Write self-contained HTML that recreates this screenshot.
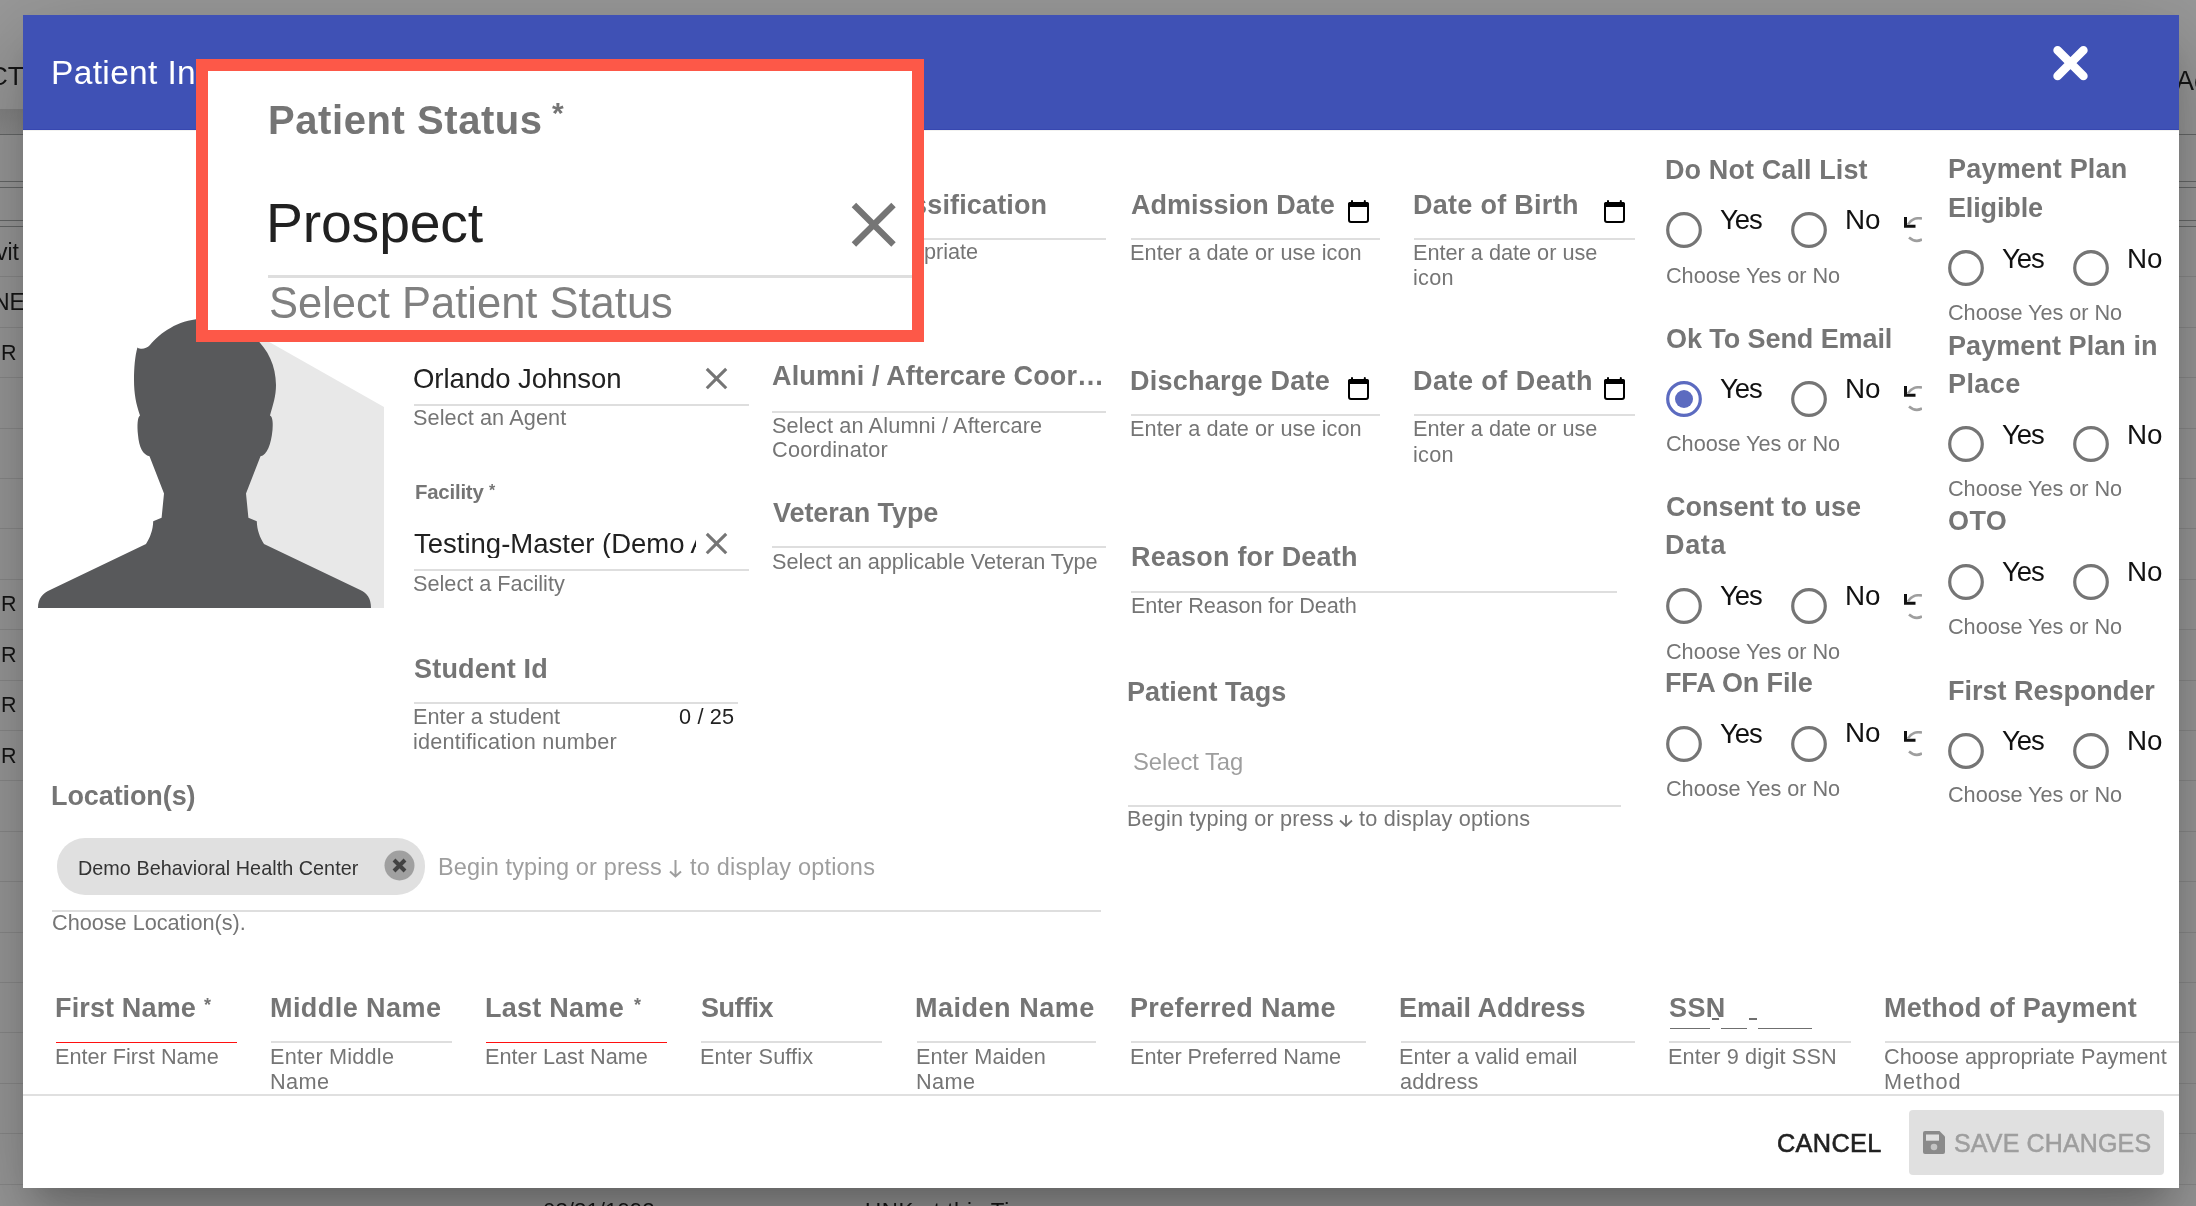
<!DOCTYPE html>
<html><head><meta charset="utf-8"><style>
html,body{margin:0;padding:0;}
body{width:2196px;height:1206px;position:relative;overflow:hidden;background:#999999;font-family:"Liberation Sans",sans-serif;}
.t{position:absolute;white-space:nowrap;will-change:transform;}
.r{position:absolute;}
.a{position:absolute;display:block;}
.modal{position:absolute;left:23px;top:15px;width:2156px;height:1173px;background:#fff;box-shadow:0 22px 30px -14px rgba(0,0,0,.2),0 48px 76px 6px rgba(0,0,0,.14),0 18px 92px 16px rgba(0,0,0,.12);}
</style></head><body>
<div class="r" style="left:0px;top:134px;width:23px;height:1px;background:#666868;"></div>
<div class="r" style="left:2179px;top:134px;width:17px;height:1px;background:#666868;"></div>
<div class="r" style="left:0px;top:181px;width:23px;height:1px;background:#666868;"></div>
<div class="r" style="left:2179px;top:181px;width:17px;height:1px;background:#666868;"></div>
<div class="r" style="left:0px;top:187px;width:23px;height:1px;background:#666868;"></div>
<div class="r" style="left:2179px;top:187px;width:17px;height:1px;background:#666868;"></div>
<div class="r" style="left:0px;top:220px;width:23px;height:1px;background:#666868;"></div>
<div class="r" style="left:2179px;top:220px;width:17px;height:1px;background:#666868;"></div>
<div class="r" style="left:0px;top:226px;width:23px;height:1px;background:#666868;"></div>
<div class="r" style="left:2179px;top:226px;width:17px;height:1px;background:#666868;"></div>
<div class="r" style="left:0px;top:109px;width:23px;height:25px;background:linear-gradient(#848484,#8e8e8e);"></div>
<div class="r" style="left:0px;top:276px;width:23px;height:1px;background:#8a8a8a;"></div>
<div class="r" style="left:2179px;top:276px;width:17px;height:1px;background:#8a8a8a;"></div>
<div class="r" style="left:0px;top:327px;width:23px;height:1px;background:#8a8a8a;"></div>
<div class="r" style="left:2179px;top:327px;width:17px;height:1px;background:#8a8a8a;"></div>
<div class="r" style="left:0px;top:377px;width:23px;height:1px;background:#8a8a8a;"></div>
<div class="r" style="left:2179px;top:377px;width:17px;height:1px;background:#8a8a8a;"></div>
<div class="r" style="left:0px;top:428px;width:23px;height:1px;background:#8a8a8a;"></div>
<div class="r" style="left:2179px;top:428px;width:17px;height:1px;background:#8a8a8a;"></div>
<div class="r" style="left:0px;top:478px;width:23px;height:1px;background:#8a8a8a;"></div>
<div class="r" style="left:2179px;top:478px;width:17px;height:1px;background:#8a8a8a;"></div>
<div class="r" style="left:0px;top:528px;width:23px;height:1px;background:#8a8a8a;"></div>
<div class="r" style="left:2179px;top:528px;width:17px;height:1px;background:#8a8a8a;"></div>
<div class="r" style="left:0px;top:579px;width:23px;height:1px;background:#8a8a8a;"></div>
<div class="r" style="left:2179px;top:579px;width:17px;height:1px;background:#8a8a8a;"></div>
<div class="r" style="left:0px;top:629px;width:23px;height:1px;background:#8a8a8a;"></div>
<div class="r" style="left:2179px;top:629px;width:17px;height:1px;background:#8a8a8a;"></div>
<div class="r" style="left:0px;top:680px;width:23px;height:1px;background:#8a8a8a;"></div>
<div class="r" style="left:2179px;top:680px;width:17px;height:1px;background:#8a8a8a;"></div>
<div class="r" style="left:0px;top:730px;width:23px;height:1px;background:#8a8a8a;"></div>
<div class="r" style="left:2179px;top:730px;width:17px;height:1px;background:#8a8a8a;"></div>
<div class="r" style="left:0px;top:780px;width:23px;height:1px;background:#8a8a8a;"></div>
<div class="r" style="left:2179px;top:780px;width:17px;height:1px;background:#8a8a8a;"></div>
<div class="r" style="left:0px;top:831px;width:23px;height:1px;background:#8a8a8a;"></div>
<div class="r" style="left:2179px;top:831px;width:17px;height:1px;background:#8a8a8a;"></div>
<div class="r" style="left:0px;top:881px;width:23px;height:1px;background:#8a8a8a;"></div>
<div class="r" style="left:2179px;top:881px;width:17px;height:1px;background:#8a8a8a;"></div>
<div class="r" style="left:0px;top:932px;width:23px;height:1px;background:#8a8a8a;"></div>
<div class="r" style="left:2179px;top:932px;width:17px;height:1px;background:#8a8a8a;"></div>
<div class="r" style="left:0px;top:982px;width:23px;height:1px;background:#8a8a8a;"></div>
<div class="r" style="left:2179px;top:982px;width:17px;height:1px;background:#8a8a8a;"></div>
<div class="r" style="left:0px;top:1032px;width:23px;height:1px;background:#8a8a8a;"></div>
<div class="r" style="left:2179px;top:1032px;width:17px;height:1px;background:#8a8a8a;"></div>
<div class="r" style="left:0px;top:1083px;width:23px;height:1px;background:#8a8a8a;"></div>
<div class="r" style="left:2179px;top:1083px;width:17px;height:1px;background:#8a8a8a;"></div>
<div class="r" style="left:0px;top:1133px;width:23px;height:1px;background:#8a8a8a;"></div>
<div class="r" style="left:2179px;top:1133px;width:17px;height:1px;background:#8a8a8a;"></div>
<div class="r" style="left:0px;top:1184px;width:23px;height:1px;background:#8a8a8a;"></div>
<div class="r" style="left:2179px;top:1184px;width:17px;height:1px;background:#8a8a8a;"></div>
<div class="t" style="left:-11.4px;top:63px;font-size:26px;line-height:26px;color:#151515;font-weight:500">CT</div>
<div class="t" style="left:-3.7px;top:240.5px;font-size:23px;line-height:23px;color:#151515">vit</div>
<div class="t" style="left:-6.8px;top:291px;font-size:23px;line-height:23px;color:#151515">NE</div>
<div class="t" style="left:0.54px;top:342.65px;font-size:21.5px;line-height:21.5px;color:#151515;">R</div>
<div class="t" style="left:0.54px;top:594.25px;font-size:21.5px;line-height:21.5px;color:#151515;">R</div>
<div class="t" style="left:0.54px;top:644.75px;font-size:21.5px;line-height:21.5px;color:#151515;">R</div>
<div class="t" style="left:0.54px;top:695.25px;font-size:21.5px;line-height:21.5px;color:#151515;">R</div>
<div class="t" style="left:0.54px;top:745.75px;font-size:21.5px;line-height:21.5px;color:#151515;">R</div>
<div class="t" style="left:2176.45px;top:68.20px;font-size:27px;line-height:27px;color:#151515;">Ac</div>
<div class="t" style="left:542.83px;top:1200.15px;font-size:22.3px;line-height:22.3px;color:#151515;">03/31/1992</div>
<div class="t" style="left:865.28px;top:1200.15px;font-size:22.3px;line-height:22.3px;color:#151515;letter-spacing:0.6px;">UNK at this Time</div>
<div class="modal"></div>
<div class="r" style="left:23px;top:15px;width:2156px;height:115px;background:#3f51b5;"></div>
<div class="r" style="left:23px;top:129px;width:2156px;height:1px;background:#3747b0;"></div>
<div class="r" style="left:23px;top:130px;width:2156px;height:1px;background:#f2f2f0;"></div>
<div class="t" style="left:51.05px;top:55.85px;font-size:33.5px;line-height:33.5px;color:#ffffff;letter-spacing:0.35px;">Patient In</div>
<svg class="a" style="left:2048px;top:41px" width="44" height="44" viewBox="0 0 44 44"><path d="M9.6 9.2 L35.4 35 M35.4 9.2 L9.6 35" stroke="#fff" stroke-width="8.6" stroke-linecap="round"/></svg>
<svg class="a" style="left:0;top:0" width="400" height="620" viewBox="0 0 400 620">
<path d="M230 320 L271 343 L384 407 L384 608 L230 608 Z" fill="#e8e8e8"/>
<path fill="#58595b" d="M38 608 C38 598 43 593 50 590 L146 544 C150 538 153 530 153.2 521.3 L161.6 517.7 L164 493.6 L149.5 456.3 C143 455 139 447 138 435 C137 425 137.5 417 140 415.4 C136 404 134 394 134 380 C134 368 135 356 137.4 347.4 C141 350 146 349 150 345 C160 333 178 320 200 319 C245 319 276 347 276 385 C276 396 273 405 270 415.4 C273 417 273 424 272.5 430 C271 445 267 455 260.5 456.3 L246 493.6 L248.4 517.7 L256.8 521.3 C257 530 260 538 264 544 L360.3 590 C367 593 371 598 371 608 Z"/>
</svg>
<div class="t" style="left:413.10px;top:365.05px;font-size:27.5px;line-height:27.5px;color:#212121;letter-spacing:-0.064px;">Orlando Johnson</div>
<svg class="a" style="left:698.29px;top:359.69px" width="37.03" height="37.03" viewBox="0 0 24 24"><path fill="#757575" d="M19 6.41L17.59 5 12 10.59 6.41 5 5 6.41 10.59 12 5 17.59 6.41 19 12 13.41 17.59 19 19 17.59 13.41 12z"/></svg>
<div class="r" style="left:414px;top:404px;width:335px;height:2px;background:#dedede;"></div>
<div class="t" style="left:413.41px;top:407.45px;font-size:21.7px;line-height:21.7px;color:#757575;letter-spacing:0.093px;">Select an Agent</div>
<div class="t" style="left:414.64px;top:481.60px;font-size:20.4px;line-height:20.4px;color:#757575;font-weight:bold;letter-spacing:-0.214px;">Facility</div>
<div class="t" style="left:488.95px;top:482.50px;font-size:16px;line-height:16px;color:#757575;font-weight:bold;">*</div>
<div class="t" style="left:413.78px;top:529.75px;font-size:27.5px;line-height:27.5px;color:#212121;width:282px;overflow:hidden;">Testing-Master (Demo Account)</div>
<svg class="a" style="left:698.29px;top:525.29px" width="37.03" height="37.03" viewBox="0 0 24 24"><path fill="#757575" d="M19 6.41L17.59 5 12 10.59 6.41 5 5 6.41 10.59 12 5 17.59 6.41 19 12 13.41 17.59 19 19 17.59 13.41 12z"/></svg>
<div class="r" style="left:414px;top:569px;width:335px;height:2px;background:#dedede;"></div>
<div class="t" style="left:413.41px;top:573.15px;font-size:21.7px;line-height:21.7px;color:#757575;letter-spacing:-0.006px;">Select a Facility</div>
<div class="t" style="left:414.02px;top:655.90px;font-size:27px;line-height:27px;color:#757575;font-weight:bold;letter-spacing:0.2px;">Student Id</div>
<div class="r" style="left:414px;top:702px;width:324px;height:2px;background:#dedede;"></div>
<div class="t" style="left:412.62px;top:706.45px;font-size:21.7px;line-height:21.7px;color:#757575;">Enter a student</div>
<div class="t" style="left:412.95px;top:731.25px;font-size:21.7px;line-height:21.7px;color:#757575;letter-spacing:0.175px;">identification number</div>
<div class="t" style="left:678.95px;top:706.45px;font-size:21.7px;line-height:21.7px;color:#212121;letter-spacing:0.16px;">0 / 25</div>
<div class="t" style="left:770.99px;top:192.00px;font-size:27px;line-height:27px;color:#757575;font-weight:bold;letter-spacing:0.143px;">Patient Classification</div>
<div class="r" style="left:772px;top:238px;width:334px;height:2px;background:#dedede;"></div>
<div class="t" style="left:771.81px;top:241.45px;font-size:21.7px;line-height:21.7px;color:#757575;">Select an appropriate</div>
<div class="t" style="left:772.13px;top:363.10px;font-size:27px;line-height:27px;color:#757575;font-weight:bold;letter-spacing:0.13px;">Alumni / Aftercare Coor…</div>
<div class="r" style="left:772px;top:411px;width:334px;height:2px;background:#dedede;"></div>
<div class="t" style="left:771.81px;top:415.45px;font-size:21.7px;line-height:21.7px;color:#757575;letter-spacing:0.137px;">Select an Alumni / Aftercare</div>
<div class="t" style="left:771.70px;top:439.45px;font-size:21.7px;line-height:21.7px;color:#757575;letter-spacing:0.24px;">Coordinator</div>
<div class="t" style="left:772.62px;top:500.30px;font-size:27px;line-height:27px;color:#757575;font-weight:bold;letter-spacing:-0.064px;">Veteran Type</div>
<div class="r" style="left:772px;top:546px;width:334px;height:2px;background:#dedede;"></div>
<div class="t" style="left:771.81px;top:550.85px;font-size:21.7px;line-height:21.7px;color:#757575;letter-spacing:-0.062px;">Select an applicable Veteran Type</div>
<div class="t" style="left:1130.93px;top:191.70px;font-size:27px;line-height:27px;color:#757575;font-weight:bold;letter-spacing:-0.023px;">Admission Date</div>
<svg class="a" style="left:1348px;top:199px" width="22" height="24" viewBox="0 0 22 24"><rect x="1" y="4" width="19" height="19" rx="2" fill="none" stroke="#000" stroke-width="2"/><rect x="0" y="3" width="21" height="5" rx="2" fill="#000"/><rect x="3" y="1" width="2" height="3" rx="1" fill="#000"/><rect x="15.8" y="1" width="2" height="3" rx="1" fill="#000"/></svg>
<div class="r" style="left:1131px;top:238px;width:249px;height:2px;background:#dedede;"></div>
<div class="t" style="left:1129.82px;top:242.45px;font-size:21.7px;line-height:21.7px;color:#757575;letter-spacing:0.061px;">Enter a date or use icon</div>
<div class="t" style="left:1412.99px;top:191.70px;font-size:27px;line-height:27px;color:#757575;font-weight:bold;letter-spacing:0.283px;">Date of Birth</div>
<svg class="a" style="left:1604px;top:199px" width="22" height="24" viewBox="0 0 22 24"><rect x="1" y="4" width="19" height="19" rx="2" fill="none" stroke="#000" stroke-width="2"/><rect x="0" y="3" width="21" height="5" rx="2" fill="#000"/><rect x="3" y="1" width="2" height="3" rx="1" fill="#000"/><rect x="15.8" y="1" width="2" height="3" rx="1" fill="#000"/></svg>
<div class="r" style="left:1414px;top:238px;width:221px;height:2px;background:#dedede;"></div>
<div class="t" style="left:1413.02px;top:242.45px;font-size:21.7px;line-height:21.7px;color:#757575;letter-spacing:-0.006px;">Enter a date or use</div>
<div class="t" style="left:1413.35px;top:267.45px;font-size:21.7px;line-height:21.7px;color:#757575;letter-spacing:0.267px;">icon</div>
<div class="t" style="left:1129.79px;top:367.70px;font-size:27px;line-height:27px;color:#757575;font-weight:bold;letter-spacing:0.238px;">Discharge Date</div>
<svg class="a" style="left:1348px;top:376px" width="22" height="24" viewBox="0 0 22 24"><rect x="1" y="4" width="19" height="19" rx="2" fill="none" stroke="#000" stroke-width="2"/><rect x="0" y="3" width="21" height="5" rx="2" fill="#000"/><rect x="3" y="1" width="2" height="3" rx="1" fill="#000"/><rect x="15.8" y="1" width="2" height="3" rx="1" fill="#000"/></svg>
<div class="r" style="left:1131px;top:414px;width:249px;height:2px;background:#dedede;"></div>
<div class="t" style="left:1129.82px;top:417.65px;font-size:21.7px;line-height:21.7px;color:#757575;letter-spacing:0.061px;">Enter a date or use icon</div>
<div class="t" style="left:1412.99px;top:367.70px;font-size:27px;line-height:27px;color:#757575;font-weight:bold;letter-spacing:0.458px;">Date of Death</div>
<svg class="a" style="left:1604px;top:376px" width="22" height="24" viewBox="0 0 22 24"><rect x="1" y="4" width="19" height="19" rx="2" fill="none" stroke="#000" stroke-width="2"/><rect x="0" y="3" width="21" height="5" rx="2" fill="#000"/><rect x="3" y="1" width="2" height="3" rx="1" fill="#000"/><rect x="15.8" y="1" width="2" height="3" rx="1" fill="#000"/></svg>
<div class="r" style="left:1414px;top:414px;width:221px;height:2px;background:#dedede;"></div>
<div class="t" style="left:1413.02px;top:417.65px;font-size:21.7px;line-height:21.7px;color:#757575;letter-spacing:-0.006px;">Enter a date or use</div>
<div class="t" style="left:1413.35px;top:444.15px;font-size:21.7px;line-height:21.7px;color:#757575;letter-spacing:0.267px;">icon</div>
<div class="t" style="left:1130.79px;top:543.90px;font-size:27px;line-height:27px;color:#757575;font-weight:bold;letter-spacing:0.193px;">Reason for Death</div>
<div class="r" style="left:1131px;top:591px;width:486px;height:2px;background:#dedede;"></div>
<div class="t" style="left:1130.82px;top:595.35px;font-size:21.7px;line-height:21.7px;color:#757575;letter-spacing:-0.1px;">Enter Reason for Death</div>
<div class="t" style="left:1127.19px;top:678.80px;font-size:27px;line-height:27px;color:#757575;font-weight:bold;letter-spacing:0.064px;">Patient Tags</div>
<div class="t" style="left:1132.82px;top:749.90px;font-size:23.8px;line-height:23.8px;color:#9e9e9e;letter-spacing:-0.056px;">Select Tag</div>
<div class="r" style="left:1128px;top:805px;width:493px;height:2px;background:#dedede;"></div>
<div class="t" style="left:1127.22px;top:807.65px;font-size:21.7px;line-height:21.7px;color:#757575;letter-spacing:0.14px;">Begin typing or press</div>
<div class="t" style="left:1359.27px;top:807.65px;font-size:21.7px;line-height:21.7px;color:#757575;letter-spacing:0.2px;">to display options</div>
<svg class="a" style="left:1338.2px;top:812.5px" width="16" height="15.5" viewBox="-8.0 -2 16 15.5"><path d="M0 0 V11.0 M-6.0 5.5 L0 11.0 L6.0 5.5" fill="none" stroke="#757575" stroke-width="1.8"/></svg>
<div class="t" style="left:1665.19px;top:156.50px;font-size:27px;line-height:27px;color:#757575;font-weight:bold;letter-spacing:0.1px;">Do Not Call List</div>
<svg class="a" style="left:1665px;top:210.6px" width="38" height="38" viewBox="0 0 38 38"><circle cx="19" cy="19" r="16.3" fill="none" stroke="#757575" stroke-width="3.2"/></svg>
<div class="t" style="left:1720.00px;top:206.25px;font-size:27.5px;line-height:27.5px;color:#111;letter-spacing:-1.0px;">Yes</div>
<svg class="a" style="left:1790px;top:210.6px" width="38" height="38" viewBox="0 0 38 38"><circle cx="19" cy="19" r="16.3" fill="none" stroke="#757575" stroke-width="3.2"/></svg>
<div class="t" style="left:1844.72px;top:206.10px;font-size:27.8px;line-height:27.8px;color:#111;">No</div>
<svg class="a" style="left:1903.5px;top:217.1px;overflow:hidden" width="18" height="26" viewBox="0 0 18 26"><path d="M1.5 0 V9.3 H11.5" fill="none" stroke="#111" stroke-width="3"/><path d="M4 7.5 C7 2 13 0.5 18 1.5" fill="none" stroke="#9e9e9e" stroke-width="2.6"/><path d="M5 20.5 C9 24 14 24.5 18 22.5" fill="none" stroke="#9e9e9e" stroke-width="2.6"/></svg>
<div class="t" style="left:1665.90px;top:264.75px;font-size:21.7px;line-height:21.7px;color:#757575;letter-spacing:-0.047px;">Choose Yes or No</div>
<div class="t" style="left:1665.89px;top:325.50px;font-size:27px;line-height:27px;color:#757575;font-weight:bold;letter-spacing:-0.08px;">Ok To Send Email</div>
<svg class="a" style="left:1665px;top:379.5px" width="38" height="38" viewBox="0 0 38 38"><circle cx="19" cy="19" r="16.3" fill="none" stroke="#5c6bc0" stroke-width="3.2"/><circle cx="19" cy="19" r="9" fill="#5c6bc0"/></svg>
<div class="t" style="left:1720.00px;top:374.95px;font-size:27.5px;line-height:27.5px;color:#111;letter-spacing:-1.0px;">Yes</div>
<svg class="a" style="left:1790px;top:379.5px" width="38" height="38" viewBox="0 0 38 38"><circle cx="19" cy="19" r="16.3" fill="none" stroke="#757575" stroke-width="3.2"/></svg>
<div class="t" style="left:1844.72px;top:374.80px;font-size:27.8px;line-height:27.8px;color:#111;">No</div>
<svg class="a" style="left:1903.5px;top:386.0px;overflow:hidden" width="18" height="26" viewBox="0 0 18 26"><path d="M1.5 0 V9.3 H11.5" fill="none" stroke="#111" stroke-width="3"/><path d="M4 7.5 C7 2 13 0.5 18 1.5" fill="none" stroke="#9e9e9e" stroke-width="2.6"/><path d="M5 20.5 C9 24 14 24.5 18 22.5" fill="none" stroke="#9e9e9e" stroke-width="2.6"/></svg>
<div class="t" style="left:1665.90px;top:432.95px;font-size:21.7px;line-height:21.7px;color:#757575;letter-spacing:-0.047px;">Choose Yes or No</div>
<div class="t" style="left:1665.89px;top:493.90px;font-size:27px;line-height:27px;color:#757575;font-weight:bold;letter-spacing:-0.008px;">Consent to use</div>
<div class="t" style="left:1665.19px;top:532.40px;font-size:27px;line-height:27px;color:#757575;font-weight:bold;letter-spacing:0.667px;">Data</div>
<svg class="a" style="left:1665px;top:587.4px" width="38" height="38" viewBox="0 0 38 38"><circle cx="19" cy="19" r="16.3" fill="none" stroke="#757575" stroke-width="3.2"/></svg>
<div class="t" style="left:1720.00px;top:582.25px;font-size:27.5px;line-height:27.5px;color:#111;letter-spacing:-1.0px;">Yes</div>
<svg class="a" style="left:1790px;top:587.4px" width="38" height="38" viewBox="0 0 38 38"><circle cx="19" cy="19" r="16.3" fill="none" stroke="#757575" stroke-width="3.2"/></svg>
<div class="t" style="left:1844.72px;top:582.10px;font-size:27.8px;line-height:27.8px;color:#111;">No</div>
<svg class="a" style="left:1903.5px;top:593.9px;overflow:hidden" width="18" height="26" viewBox="0 0 18 26"><path d="M1.5 0 V9.3 H11.5" fill="none" stroke="#111" stroke-width="3"/><path d="M4 7.5 C7 2 13 0.5 18 1.5" fill="none" stroke="#9e9e9e" stroke-width="2.6"/><path d="M5 20.5 C9 24 14 24.5 18 22.5" fill="none" stroke="#9e9e9e" stroke-width="2.6"/></svg>
<div class="t" style="left:1665.90px;top:641.15px;font-size:21.7px;line-height:21.7px;color:#757575;letter-spacing:-0.047px;">Choose Yes or No</div>
<div class="t" style="left:1665.19px;top:670.10px;font-size:27px;line-height:27px;color:#757575;font-weight:bold;letter-spacing:-0.13px;">FFA On File</div>
<svg class="a" style="left:1665px;top:724.7px" width="38" height="38" viewBox="0 0 38 38"><circle cx="19" cy="19" r="16.3" fill="none" stroke="#757575" stroke-width="3.2"/></svg>
<div class="t" style="left:1720.00px;top:719.55px;font-size:27.5px;line-height:27.5px;color:#111;letter-spacing:-1.0px;">Yes</div>
<svg class="a" style="left:1790px;top:724.7px" width="38" height="38" viewBox="0 0 38 38"><circle cx="19" cy="19" r="16.3" fill="none" stroke="#757575" stroke-width="3.2"/></svg>
<div class="t" style="left:1844.72px;top:719.40px;font-size:27.8px;line-height:27.8px;color:#111;">No</div>
<svg class="a" style="left:1903.5px;top:731.2px;overflow:hidden" width="18" height="26" viewBox="0 0 18 26"><path d="M1.5 0 V9.3 H11.5" fill="none" stroke="#111" stroke-width="3"/><path d="M4 7.5 C7 2 13 0.5 18 1.5" fill="none" stroke="#9e9e9e" stroke-width="2.6"/><path d="M5 20.5 C9 24 14 24.5 18 22.5" fill="none" stroke="#9e9e9e" stroke-width="2.6"/></svg>
<div class="t" style="left:1665.90px;top:778.45px;font-size:21.7px;line-height:21.7px;color:#757575;letter-spacing:-0.047px;">Choose Yes or No</div>
<div class="t" style="left:1947.59px;top:156.30px;font-size:27px;line-height:27px;color:#757575;font-weight:bold;letter-spacing:0.2px;">Payment Plan</div>
<div class="t" style="left:1947.59px;top:194.80px;font-size:27px;line-height:27px;color:#757575;font-weight:bold;letter-spacing:-0.143px;">Eligible</div>
<svg class="a" style="left:1947.4px;top:248.8px" width="38" height="38" viewBox="0 0 38 38"><circle cx="19" cy="19" r="16.3" fill="none" stroke="#757575" stroke-width="3.2"/></svg>
<div class="t" style="left:2002.40px;top:245.05px;font-size:27.5px;line-height:27.5px;color:#111;letter-spacing:-1.0px;">Yes</div>
<svg class="a" style="left:2072.4px;top:248.8px" width="38" height="38" viewBox="0 0 38 38"><circle cx="19" cy="19" r="16.3" fill="none" stroke="#757575" stroke-width="3.2"/></svg>
<div class="t" style="left:2127.12px;top:244.90px;font-size:27.8px;line-height:27.8px;color:#111;">No</div>
<div class="t" style="left:1948.30px;top:302.45px;font-size:21.7px;line-height:21.7px;color:#757575;letter-spacing:-0.047px;">Choose Yes or No</div>
<div class="t" style="left:1947.59px;top:332.50px;font-size:27px;line-height:27px;color:#757575;font-weight:bold;letter-spacing:0.071px;">Payment Plan in</div>
<div class="t" style="left:1947.59px;top:371.00px;font-size:27px;line-height:27px;color:#757575;font-weight:bold;letter-spacing:0.4px;">Place</div>
<svg class="a" style="left:1947.4px;top:424.9px" width="38" height="38" viewBox="0 0 38 38"><circle cx="19" cy="19" r="16.3" fill="none" stroke="#757575" stroke-width="3.2"/></svg>
<div class="t" style="left:2002.40px;top:420.75px;font-size:27.5px;line-height:27.5px;color:#111;letter-spacing:-1.0px;">Yes</div>
<svg class="a" style="left:2072.4px;top:424.9px" width="38" height="38" viewBox="0 0 38 38"><circle cx="19" cy="19" r="16.3" fill="none" stroke="#757575" stroke-width="3.2"/></svg>
<div class="t" style="left:2127.12px;top:420.60px;font-size:27.8px;line-height:27.8px;color:#111;">No</div>
<div class="t" style="left:1948.30px;top:478.25px;font-size:21.7px;line-height:21.7px;color:#757575;letter-spacing:-0.047px;">Choose Yes or No</div>
<div class="t" style="left:1948.29px;top:508.40px;font-size:27px;line-height:27px;color:#757575;font-weight:bold;letter-spacing:0.4px;">OTO</div>
<svg class="a" style="left:1947.4px;top:562.6px" width="38" height="38" viewBox="0 0 38 38"><circle cx="19" cy="19" r="16.3" fill="none" stroke="#757575" stroke-width="3.2"/></svg>
<div class="t" style="left:2002.40px;top:558.25px;font-size:27.5px;line-height:27.5px;color:#111;letter-spacing:-1.0px;">Yes</div>
<svg class="a" style="left:2072.4px;top:562.6px" width="38" height="38" viewBox="0 0 38 38"><circle cx="19" cy="19" r="16.3" fill="none" stroke="#757575" stroke-width="3.2"/></svg>
<div class="t" style="left:2127.12px;top:558.10px;font-size:27.8px;line-height:27.8px;color:#111;">No</div>
<div class="t" style="left:1948.30px;top:616.15px;font-size:21.7px;line-height:21.7px;color:#757575;letter-spacing:-0.047px;">Choose Yes or No</div>
<div class="t" style="left:1947.59px;top:677.50px;font-size:27px;line-height:27px;color:#757575;font-weight:bold;letter-spacing:-0.014px;">First Responder</div>
<svg class="a" style="left:1947.4px;top:731.6px" width="38" height="38" viewBox="0 0 38 38"><circle cx="19" cy="19" r="16.3" fill="none" stroke="#757575" stroke-width="3.2"/></svg>
<div class="t" style="left:2002.40px;top:727.25px;font-size:27.5px;line-height:27.5px;color:#111;letter-spacing:-1.0px;">Yes</div>
<svg class="a" style="left:2072.4px;top:731.6px" width="38" height="38" viewBox="0 0 38 38"><circle cx="19" cy="19" r="16.3" fill="none" stroke="#757575" stroke-width="3.2"/></svg>
<div class="t" style="left:2127.12px;top:727.10px;font-size:27.8px;line-height:27.8px;color:#111;">No</div>
<div class="t" style="left:1948.30px;top:784.45px;font-size:21.7px;line-height:21.7px;color:#757575;letter-spacing:-0.047px;">Choose Yes or No</div>
<div class="t" style="left:51.09px;top:782.50px;font-size:27px;line-height:27px;color:#757575;font-weight:bold;letter-spacing:-0.09px;">Location(s)</div>
<div class="r" style="left:57px;top:838px;width:368px;height:57px;background:#e0e0e0;border-radius:28px;"></div>
<div class="t" style="left:77.88px;top:858.60px;font-size:19.8px;line-height:19.8px;color:#333333;letter-spacing:0.036px;">Demo Behavioral Health Center</div>
<svg class="a" style="left:384px;top:850px" width="31" height="31" viewBox="0 0 31 31"><circle cx="15.5" cy="15.5" r="15" fill="#a0a0a0"/><path d="M10 10 L21 21 M21 10 L10 21" stroke="#424242" stroke-width="4"/></svg>
<div class="t" style="left:438.37px;top:855.75px;font-size:23.5px;line-height:23.5px;color:#9e9e9e;letter-spacing:0.15px;">Begin typing or press</div>
<div class="t" style="left:689.84px;top:855.75px;font-size:23.5px;line-height:23.5px;color:#9e9e9e;letter-spacing:0.194px;">to display options</div>
<svg class="a" style="left:668.3px;top:857.5px" width="15" height="21.0" viewBox="-7.5 -2 15 21.0"><path d="M0 0 V16.5 M-5.5 11.5 L0 16.5 L5.5 11.5" fill="none" stroke="#9e9e9e" stroke-width="2"/></svg>
<div class="r" style="left:52px;top:910px;width:1049px;height:2px;background:#dedede;"></div>
<div class="t" style="left:51.80px;top:912.25px;font-size:21.7px;line-height:21.7px;color:#757575;letter-spacing:-0.017px;">Choose Location(s).</div>
<div class="t" style="left:54.69px;top:994.70px;font-size:27px;line-height:27px;color:#757575;font-weight:bold;letter-spacing:0.144px;">First Name</div>

<div class="r" style="left:56px;top:1042px;width:181px;height:1.400000000000091px;background:#ff1010;"></div>
<div class="t" style="left:54.72px;top:1045.65px;font-size:21.7px;line-height:21.7px;color:#757575;letter-spacing:-0.013px;">Enter First Name</div>
<div class="t" style="left:269.59px;top:994.70px;font-size:27px;line-height:27px;color:#757575;font-weight:bold;letter-spacing:0.44px;">Middle Name</div>
<div class="r" style="left:271px;top:1041px;width:181px;height:2px;background:#dedede;"></div>
<div class="t" style="left:269.62px;top:1045.65px;font-size:21.7px;line-height:21.7px;color:#757575;letter-spacing:0.2px;">Enter Middle</div>
<div class="t" style="left:269.62px;top:1070.65px;font-size:21.7px;line-height:21.7px;color:#757575;letter-spacing:0.4px;">Name</div>
<div class="t" style="left:485.19px;top:994.70px;font-size:27px;line-height:27px;color:#757575;font-weight:bold;letter-spacing:0.262px;">Last Name</div>

<div class="r" style="left:486px;top:1042px;width:181px;height:1.400000000000091px;background:#ff1010;"></div>
<div class="t" style="left:485.22px;top:1045.65px;font-size:21.7px;line-height:21.7px;color:#757575;letter-spacing:0.014px;">Enter Last Name</div>
<div class="t" style="left:700.82px;top:994.70px;font-size:27px;line-height:27px;color:#757575;font-weight:bold;letter-spacing:-0.5px;">Suffix</div>
<div class="r" style="left:701px;top:1041px;width:181px;height:2px;background:#dedede;"></div>
<div class="t" style="left:699.82px;top:1045.65px;font-size:21.7px;line-height:21.7px;color:#757575;letter-spacing:0.118px;">Enter Suffix</div>
<div class="t" style="left:915.49px;top:994.70px;font-size:27px;line-height:27px;color:#757575;font-weight:bold;letter-spacing:0.52px;">Maiden Name</div>
<div class="r" style="left:917px;top:1041px;width:179px;height:2px;background:#dedede;"></div>
<div class="t" style="left:915.52px;top:1045.65px;font-size:21.7px;line-height:21.7px;color:#757575;letter-spacing:0.064px;">Enter Maiden</div>
<div class="t" style="left:915.52px;top:1070.65px;font-size:21.7px;line-height:21.7px;color:#757575;letter-spacing:0.4px;">Name</div>
<div class="t" style="left:1130.19px;top:994.70px;font-size:27px;line-height:27px;color:#757575;font-weight:bold;letter-spacing:0.338px;">Preferred Name</div>
<div class="r" style="left:1131px;top:1041px;width:235px;height:2px;background:#dedede;"></div>
<div class="t" style="left:1130.22px;top:1045.65px;font-size:21.7px;line-height:21.7px;color:#757575;letter-spacing:-0.058px;">Enter Preferred Name</div>
<div class="t" style="left:1399.39px;top:994.70px;font-size:27px;line-height:27px;color:#757575;font-weight:bold;letter-spacing:-0.008px;">Email Address</div>
<div class="r" style="left:1401px;top:1041px;width:234px;height:2px;background:#dedede;"></div>
<div class="t" style="left:1399.42px;top:1045.65px;font-size:21.7px;line-height:21.7px;color:#757575;letter-spacing:0.0px;">Enter a valid email</div>
<div class="t" style="left:1400.28px;top:1070.65px;font-size:21.7px;line-height:21.7px;color:#757575;letter-spacing:0.2px;">address</div>
<div class="t" style="left:1669.12px;top:994.70px;font-size:27px;line-height:27px;color:#757575;font-weight:bold;letter-spacing:0.4px;">SSN</div>
<div class="r" style="left:1669px;top:1041px;width:182px;height:2px;background:#dedede;"></div>
<div class="t" style="left:1668.12px;top:1045.65px;font-size:21.7px;line-height:21.7px;color:#757575;letter-spacing:0.144px;">Enter 9 digit SSN</div>
<div class="t" style="left:1883.59px;top:994.70px;font-size:27px;line-height:27px;color:#757575;font-weight:bold;letter-spacing:0.238px;">Method of Payment</div>
<div class="r" style="left:1885px;top:1041px;width:294px;height:2px;background:#dedede;"></div>
<div class="t" style="left:1884.30px;top:1045.65px;font-size:21.7px;line-height:21.7px;color:#757575;letter-spacing:0.024px;">Choose appropriate Payment</div>
<div class="t" style="left:1883.62px;top:1070.65px;font-size:21.7px;line-height:21.7px;color:#757575;letter-spacing:0.84px;">Method</div>
<div class="t" style="left:203.95px;top:996.00px;font-size:18px;line-height:18px;color:#757575;font-weight:bold;">*</div>
<div class="t" style="left:633.95px;top:996.00px;font-size:18px;line-height:18px;color:#757575;font-weight:bold;">*</div>
<div class="r" style="left:1670px;top:1027.8px;width:40px;height:1.6000000000001364px;background:#6f6f6f;"></div>
<div class="r" style="left:1720.6px;top:1027.8px;width:26.800000000000182px;height:1.6000000000001364px;background:#6f6f6f;"></div>
<div class="r" style="left:1758px;top:1027.8px;width:54px;height:1.6000000000001364px;background:#6f6f6f;"></div>
<div class="r" style="left:1711.5px;top:1017.8px;width:7.5px;height:1.8000000000000682px;background:#6f6f6f;"></div>
<div class="r" style="left:1749px;top:1017.8px;width:7.7000000000000455px;height:1.8000000000000682px;background:#6f6f6f;"></div>
<div class="r" style="left:23px;top:1094px;width:2156px;height:2px;background:#e0e0e0;"></div>
<div class="t" style="left:1776.72px;top:1130.65px;font-size:25.3px;line-height:25.3px;color:#212121;letter-spacing:0.34px;-webkit-text-stroke:0.6px #212121;">CANCEL</div>
<div class="r" style="left:1909px;top:1110px;width:255px;height:64.5px;background:#e0e0e0;border-radius:4px;"></div>
<svg class="a" style="left:1923px;top:1131px" width="23" height="23" viewBox="0 0 23 23"><path d="M2 0 H16.5 L22 5.5 V21 A2 2 0 0 1 20 23 H2 A2 2 0 0 1 0 21 V2 A2 2 0 0 1 2 0 Z" fill="#8a8a8a"/><rect x="3" y="3.5" width="13" height="6.2" fill="#e0e0e0"/><circle cx="11" cy="16" r="3.3" fill="#c4c4c4"/></svg>
<div class="t" style="left:1953.66px;top:1130.80px;font-size:25px;line-height:25px;color:#9e9e9e;letter-spacing:0.155px;-webkit-text-stroke:0.5px #9e9e9e;">SAVE CHANGES</div>
<div class="r" style="left:196px;top:59px;width:728px;height:283px;background:#ffffff;border:12px solid #fd5848;box-sizing:border-box;"></div>
<div class="t" style="left:268.32px;top:100.00px;font-size:40px;line-height:40px;color:#757575;font-weight:bold;letter-spacing:0.569px;">Patient Status</div>
<div class="t" style="left:551.91px;top:98.00px;font-size:30px;line-height:30px;color:#757575;font-weight:bold;">*</div>
<div class="t" style="left:266.46px;top:196.35px;font-size:55.3px;line-height:55.3px;color:#212121;letter-spacing:-0.143px;">Prospect</div>
<svg class="a" style="left:835.89px;top:186.69px" width="75.43" height="75.43" viewBox="0 0 24 24"><path fill="#757575" d="M19 6.41L17.59 5 12 10.59 6.41 5 5 6.41 10.59 12 5 17.59 6.41 19 12 13.41 17.59 19 19 17.59 13.41 12z"/></svg>
<div class="r" style="left:268px;top:275px;width:644px;height:3px;background:#dedede;"></div>
<div class="t" style="left:269.02px;top:281.75px;font-size:43.5px;line-height:43.5px;color:#808080;letter-spacing:0.0px;">Select Patient Status</div>
</body></html>
